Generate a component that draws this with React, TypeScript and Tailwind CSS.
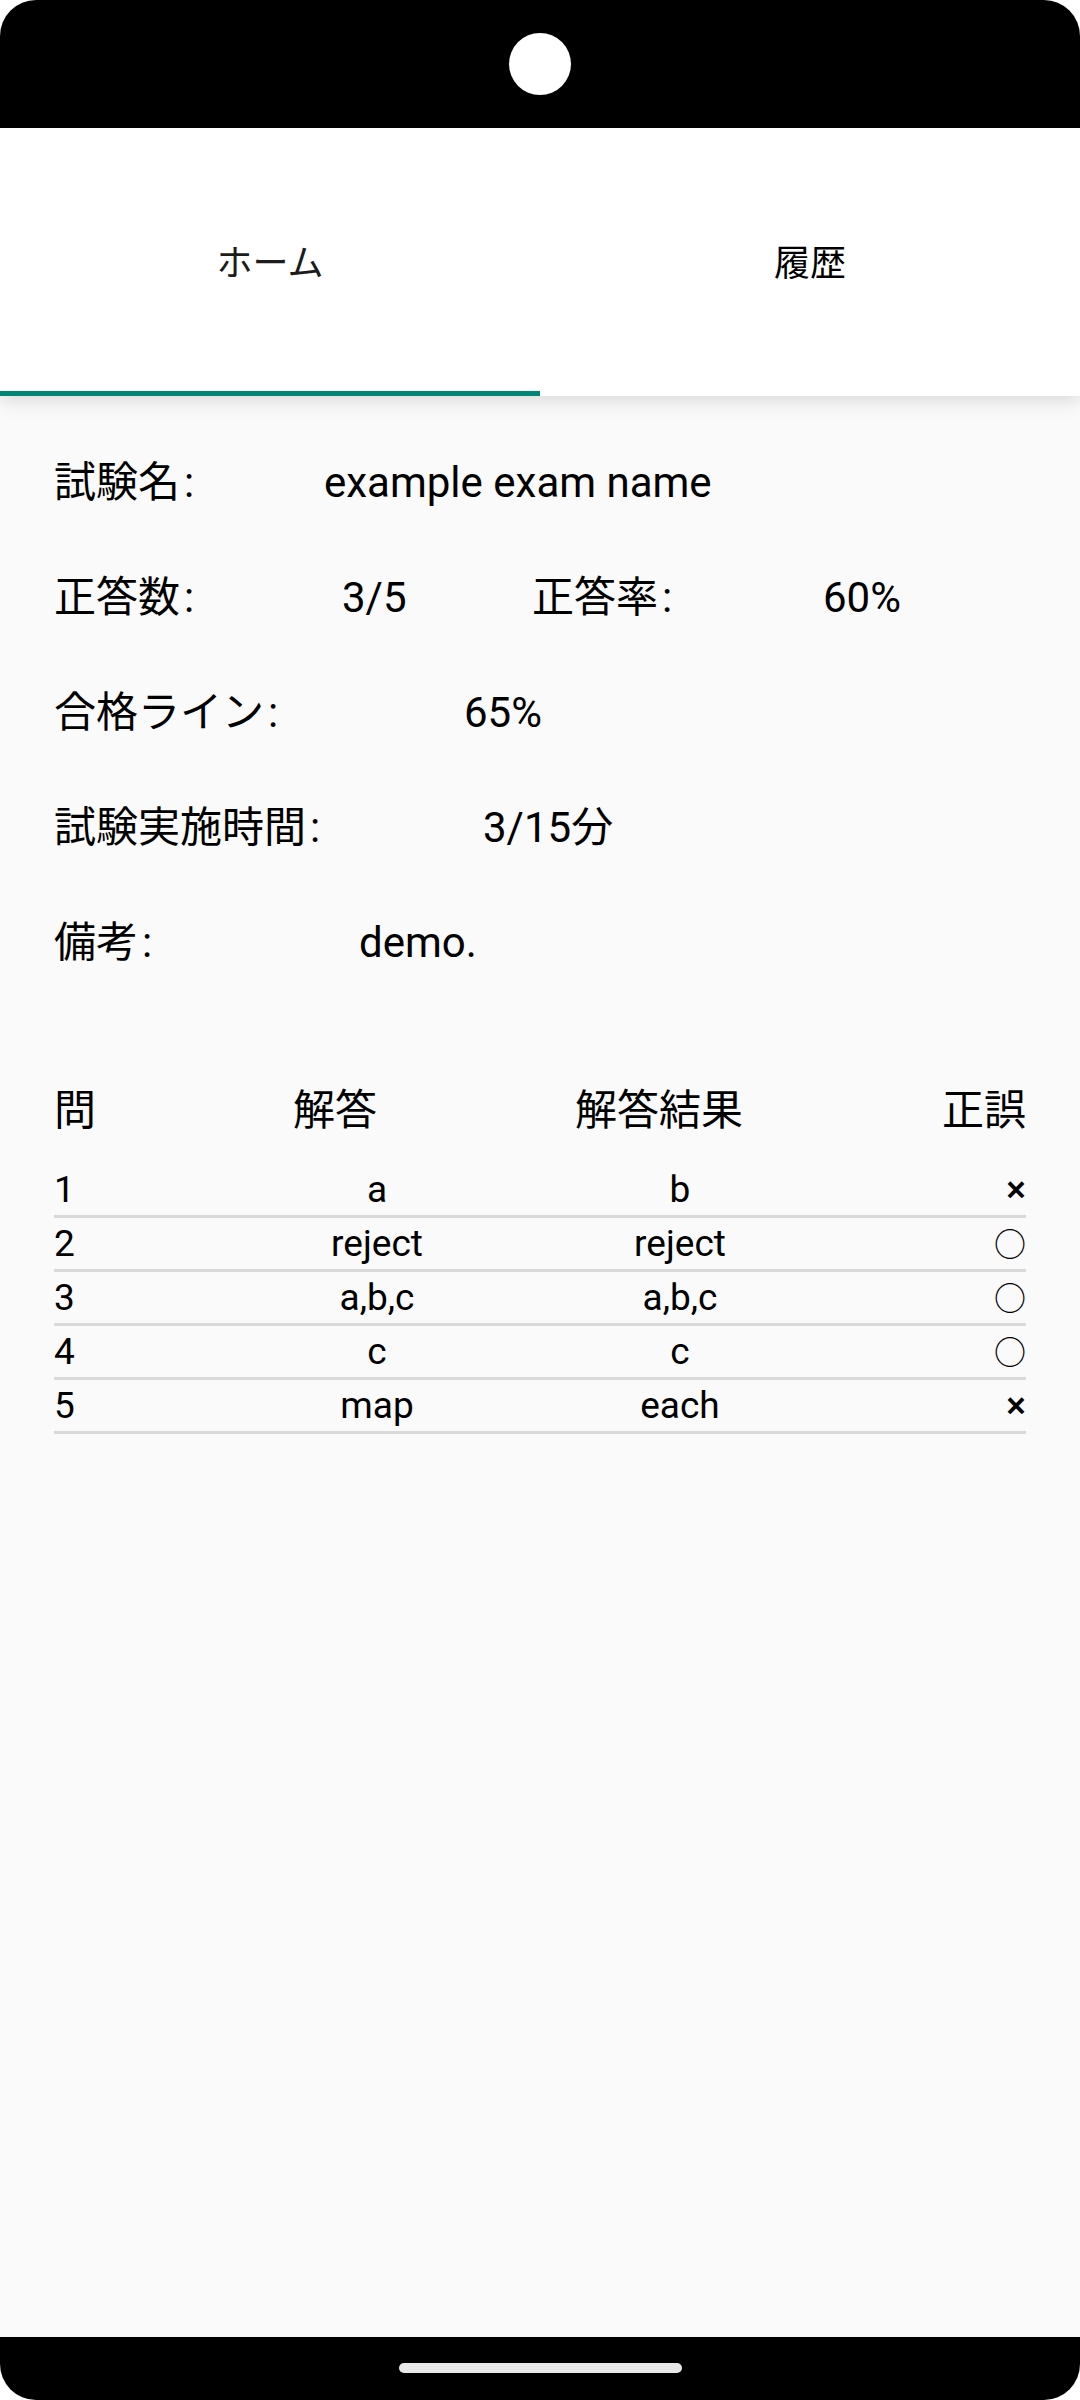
import React from 'react';

const font = "font-['Roboto','Noto_Sans_CJK_JP',sans-serif]";

const answers = [
  { no: '1', answer: 'a', result: 'b', ok: false },
  { no: '2', answer: 'reject', result: 'reject', ok: true },
  { no: '3', answer: 'a,b,c', result: 'a,b,c', ok: true },
  { no: '4', answer: 'c', result: 'c', ok: true },
  { no: '5', answer: 'map', result: 'each', ok: false },
];

const Label: React.FC<{ text: string; w: string }> = ({ text, w }) => (
  <span className={w}>
    {text}
    <span className="ml-[4px]">:</span>
  </span>
);

const App: React.FC = () => {
  return (
    <div className={`w-[1080px] h-[2400px] bg-white text-black ${font}`}>
      <div className="h-full flex flex-col bg-black rounded-[36px] overflow-hidden">
        {/* status bar / camera cutout */}
        <div className="h-[128px] flex justify-center pt-[33px] shrink-0">
          <div className="w-[62px] h-[62px] rounded-full bg-white" />
        </div>

        {/* tabs */}
        <div className="relative z-10 bg-white shadow-[0_5px_18px_rgba(0,0,0,0.13)] shrink-0">
          <div className="flex h-[263px] pt-[9px]">
            <div className="flex-1 flex items-center justify-center text-[36px] text-[#1c1c1c]">ホーム</div>
            <div className="flex-1 flex items-center justify-center text-[36px]">履歴</div>
          </div>
          <div className="flex">
            <div className="w-1/2 h-[5px] bg-[#008577]" />
          </div>
        </div>

        {/* content */}
        <div className="flex-1 bg-[#fafafa] px-[54px] pt-[29px] text-[42px] leading-none">
          <div className="h-[115px] flex items-center">
            <Label text="試験名" w="w-[270px]" />
            <span>example exam name</span>
          </div>
          <div className="h-[115px] flex items-center">
            <Label text="正答数" w="w-[288px]" />
            <span className="w-[190px]">3/5</span>
            <Label text="正答率" w="w-[291px]" />
            <span>60%</span>
          </div>
          <div className="h-[115px] flex items-center">
            <Label text="合格ライン" w="w-[410px]" />
            <span>65%</span>
          </div>
          <div className="h-[115px] flex items-center">
            <Label text="試験実施時間" w="w-[429px]" />
            <span>3/15分</span>
          </div>
          <div className="h-[115px] flex items-center">
            <Label text="備考" w="w-[305px]" />
            <span>demo.</span>
          </div>

          {/* answers table */}
          <div className="mt-[81px]">
            <div className="h-[60px] flex items-center">
              <span className="w-[134px]">問</span>
              <span className="w-[294px] text-center">解答</span>
              <span className="w-[354px] text-center">解答結果</span>
              <span className="flex-1 text-right">正誤</span>
            </div>
            <div className="mt-[23px] text-[37px]">
              {answers.map((a) => (
                <div key={a.no} className="h-[54px] flex items-center border-b-[3px] border-[#d9d9d9]">
                  <span className="w-[176px]">{a.no}</span>
                  <span className="w-[294px] text-center">{a.answer}</span>
                  <span className="w-[312px] text-center">{a.result}</span>
                  <span className="flex-1 text-right">
                    {a.ok ? (
                      <span className="text-[32px] font-['Noto_Sans_CJK_JP',sans-serif]">○</span>
                    ) : (
                      <span className="text-[37px] font-medium">×</span>
                    )}
                  </span>
                </div>
              ))}
            </div>
          </div>
        </div>

        {/* navigation bar */}
        <div className="h-[63px] shrink-0 flex justify-center pt-[26px]">
          <div className="w-[283px] h-[10px] rounded-full bg-[#e8e8e8]" />
        </div>
      </div>
    </div>
  );
};

export default App;
